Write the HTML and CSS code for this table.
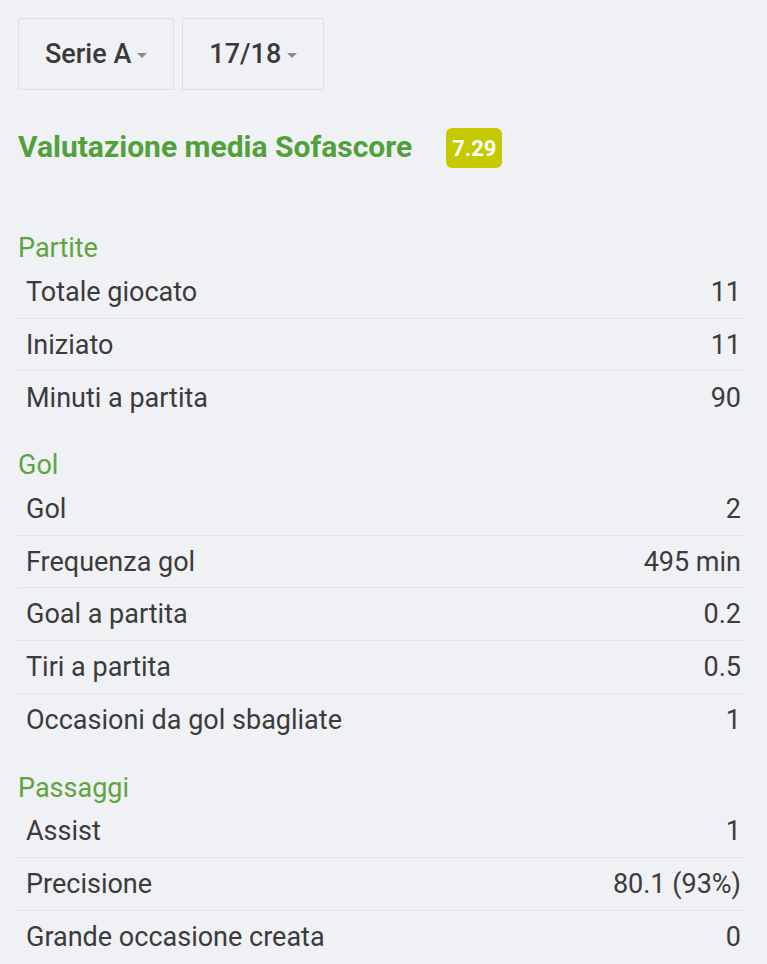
FILE: index.html
```html
<!DOCTYPE html>
<html lang="it">
<head>
<meta charset="utf-8">
<link rel="stylesheet" href="styles.css">
</head>
<body>
<div class="page">
  <div class="filters">
    <div class="dropdown">Serie A<span class="caret"></span></div>
    <div class="dropdown">17/18<span class="caret"></span></div>
  </div>
  <div class="rating">
    <span class="rating-title">Valutazione media Sofascore</span>
    <span class="badge">7.29</span>
  </div>

  <div class="section">
    <div class="section-title">Partite</div>
    <div class="row"><span>Totale giocato</span><span>11</span></div>
    <div class="row"><span>Iniziato</span><span>11</span></div>
    <div class="row"><span>Minuti a partita</span><span>90</span></div>
  </div>

  <div class="section">
    <div class="section-title">Gol</div>
    <div class="row"><span>Gol</span><span>2</span></div>
    <div class="row"><span>Frequenza gol</span><span>495 min</span></div>
    <div class="row"><span>Goal a partita</span><span>0.2</span></div>
    <div class="row"><span>Tiri a partita</span><span>0.5</span></div>
    <div class="row"><span>Occasioni da gol sbagliate</span><span>1</span></div>
  </div>

  <div class="section">
    <div class="section-title">Passaggi</div>
    <div class="row"><span>Assist</span><span>1</span></div>
    <div class="row"><span>Precisione</span><span>80.1 (93%)</span></div>
    <div class="row"><span>Grande occasione creata</span><span>0</span></div>
  </div>
</div>
</body>
</html>
```

FILE: styles.css
```css
html, body {
  margin: 0;
  padding: 0;
  background: #f0f1f5;
}
body {
  font-family: Roboto, "Liberation Sans", sans-serif;
  color: #3b3b3b;
}
.page {
  padding: 18px 22px 0 18px;
}
.filters {
  display: flex;
  gap: 8px;
}
.dropdown {
  height: 72px;
  box-sizing: border-box;
  border: 1px solid #dcdee2;
  border-radius: 2px;
  padding: 0 26px;
  display: flex;
  align-items: center;
  font-size: 27px;
  font-weight: 500;
  color: #3a3a3a;
}
.caret {
  margin-left: 6px;
  width: 0;
  height: 0;
  border-left: 5px solid transparent;
  border-right: 5px solid transparent;
  border-top: 5px solid #8a8a8a;
  margin-top: 2px;
}
.rating {
  display: flex;
  align-items: center;
  margin-top: 38px;
  height: 40px;
}
.rating-title {
  font-size: 30px;
  font-weight: 700;
  color: #52a03a;
  margin-top: -4px;
}
.badge {
  margin-left: 34px;
  background: #c5c900;
  color: #fff;
  font-weight: 700;
  font-size: 22px;
  height: 40px;
  padding: 0 6px;
  border-radius: 6px;
  display: flex;
  align-items: center;
}
.section {
  margin-top: 63px;
}
.section + .section {
  margin-top: 24px;
}
.section-title {
  color: #5ca53e;
  font-size: 27px;
  height: 35px;
  line-height: 35px;
}
.row {
  display: flex;
  justify-content: space-between;
  align-items: center;
  height: 52.7px;
  padding: 0 4px 0 8px;
  font-size: 27px;
  box-sizing: border-box;
  border-bottom: 1px solid #e1e3e7;
}
.row:last-child {
  border-bottom: none;
}
```
